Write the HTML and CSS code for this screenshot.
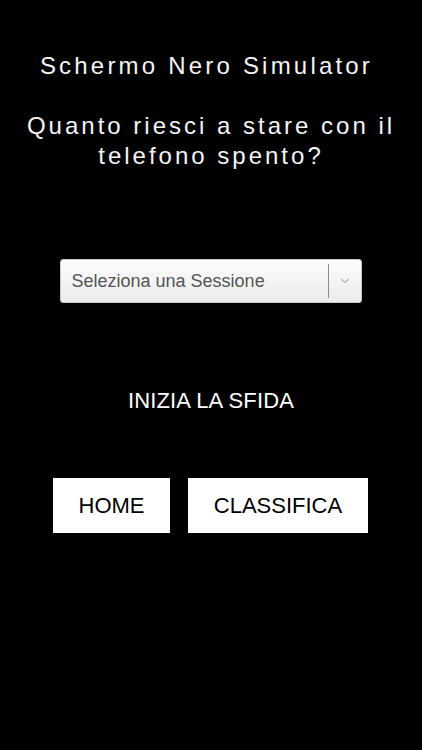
FILE: index.html
```html
<!DOCTYPE html>
<html lang="it">
<head>
    <meta charset="UTF-8">
    <title>Schermo Nero Simulator</title>
    <link rel="stylesheet" href="styles.css">
</head>
<body>
    <div class="screen">
        <h1 class="title">Schermo Nero Simulator</h1>
        <p class="question">Quanto riesci a stare con il<br>telefono spento?</p>

        <!-- scelta della sessione -->
        <div class="select">
            <span class="select-label">Seleziona una Sessione</span>
            <span class="select-arrow">
                <svg width="10" height="6" viewBox="0 0 10 6"><path d="M1 1 L5 4.5 L9 1" fill="none" stroke="#b4b4b4" stroke-width="1.2"/></svg>
            </span>
        </div>

        <div class="start">INIZIA LA SFIDA</div>

        <div class="buttons">
            <div class="btn btn-home">HOME</div>
            <div class="btn btn-rank">CLASSIFICA</div>
        </div>
    </div>
</body>
</html>
```

FILE: styles.css
```css
body {
    margin: 0;
    height: 100vh;
    overflow: hidden;
    background: #000;
    font-family: 'Liberation Sans', Arial, sans-serif;
    color: #fff;
}

.screen {
    display: flex;
    flex-direction: column;
    align-items: center;
}

/* titolo */
.title {
    margin: 51px 9px 0 0;
    font-size: 24px;
    font-weight: normal;
    letter-spacing: 3.2px;
    line-height: 30px;
    color: #f4f4f4;
}

.question {
    margin: 30px 0 0;
    font-size: 24px;
    letter-spacing: 3px;
    line-height: 30px;
    text-align: center;
    color: #f4f4f4;
}

/* menu a tendina */
.select {
    margin-top: 88px;
    margin-right: 1px;
    width: 302px;
    height: 44px;
    box-sizing: border-box;
    display: flex;
    align-items: center;
    background: linear-gradient(#fdfdfd, #ebebeb);
    border: 1px solid #c8c8c8;
    border-radius: 3px;
}

.select-label {
    flex: 1;
    padding-left: 11px;
    font-size: 18px;
    color: #555;
}

.select-arrow {
    width: 32px;
    height: 34px;
    border-left: 1px solid #8c8c8c;
    display: flex;
    align-items: center;
    justify-content: center;
}

.start {
    margin-top: 86px;
    font-size: 22px;
    letter-spacing: 0.15px;
    line-height: 24px;
}

/* pulsanti */
.buttons {
    margin-top: 65px;
    margin-right: 1px;
    display: flex;
    gap: 18px;
}

.btn {
    height: 55px;
    background: #fff;
    color: #000;
    font-size: 22px;
    display: flex;
    align-items: center;
    justify-content: center;
}

.btn-home { width: 117px; }
.btn-rank { width: 180px; }
```
